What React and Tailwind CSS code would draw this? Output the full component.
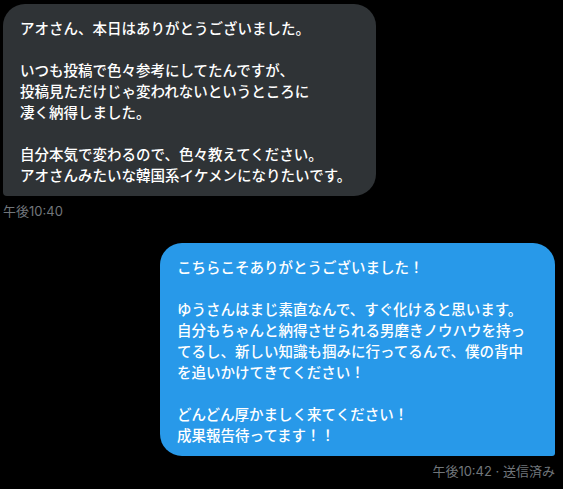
export default function App() {
  return (
    <div className="w-[563px] h-[489px] bg-black overflow-hidden flex flex-col font-['Noto_Sans_CJK_JP','Noto_Sans',sans-serif]">
      <div className="ml-[3px] mt-[4px] w-[373px] bg-[#2f3336] rounded-[22px] rounded-bl-[4px] pl-[17px] pr-[10px] pt-[13px] pb-[11px] text-white text-[14.5px] leading-[21px] font-medium whitespace-pre">
        {"アオさん、本日はありがとうございました。\n\nいつも投稿で色々参考にしてたんですが、\n投稿見ただけじゃ変われないというところに\n凄く納得しました。\n\n自分本気で変わるので、色々教えてください。\nアオさんみたいな韓国系イケメンになりたいです。"}
      </div>
      <div className="ml-[3px] mt-[6px] text-[13px] leading-[18px] text-[#71767b] font-['Inter','Noto_Sans_CJK_JP',sans-serif]">
        午後10:40
      </div>
      <div className="ml-[160px] mt-[23px] w-[395px] bg-[#2899e9] rounded-[22px] rounded-br-[3px] pl-[17px] pr-[10px] pt-[13px] pb-[11px] text-white text-[14.5px] leading-[21px] font-medium whitespace-pre">
        {"こちらこそありがとうございました！\n\nゆうさんはまじ素直なんで、すぐ化けると思います。\n自分もちゃんと納得させられる男磨きノウハウを持っ\nてるし、新しい知識も掴みに行ってるんで、僕の背中\nを追いかけてきてください！\n\nどんどん厚かましく来てください！\n成果報告待ってます！！"}
      </div>
      <div className="mr-[8px] mt-[6px] self-end text-[13px] leading-[18px] text-[#71767b] font-['Inter','Noto_Sans_CJK_JP',sans-serif]">
        午後10:42 · 送信済み
      </div>
    </div>
  );
}
